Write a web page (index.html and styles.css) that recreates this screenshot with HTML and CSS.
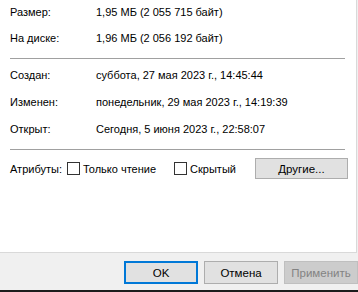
FILE: index.html
```html
<!DOCTYPE html>
<html lang="ru">
<head>
  <meta charset="UTF-8" />
  <title>Свойства</title>
  <link rel="stylesheet" href="styles.css">
</head>
<body>

  <div class="panel">
    <div class="group first">
      <div class="row"><span class="label">Размер:</span><span>1,95 МБ (2 055 715 байт)</span></div>
      <div class="row"><span class="label">На диске:</span><span>1,96 МБ (2 056 192 байт)</span></div>
    </div>
    <div class="sep"></div>
    <div class="group dates">
      <div class="row"><span class="label">Создан:</span><span>суббота, 27 мая 2023 г., 14:45:44</span></div>
      <div class="row"><span class="label">Изменен:</span><span>понедельник, 29 мая 2023 г., 14:19:39</span></div>
      <div class="row"><span class="label">Открыт:</span><span>Сегодня, 5 июня 2023 г., 22:58:07</span></div>
    </div>
    <div class="sep"></div>
    <div class="attrs">
      <span>Атрибуты:</span>
      <label class="check"><span class="box"></span>Только чтение</label>
      <label class="check hidden-attr"><span class="box"></span>Скрытый</label>
      <button class="btn other">Другие...</button>
    </div>
  </div>

  <div class="actions">
    <button class="btn default">OK</button>
    <button class="btn">Отмена</button>
    <button class="btn" disabled>Применить</button>
  </div>

  <div class="taskbar"></div>

</body>
</html>
```

FILE: styles.css
```css
* {
  margin: 0;
  padding: 0;
  box-sizing: border-box;
}

html, body {
  width: 358px;
  height: 292px;
  overflow: hidden;
}

body {
  background: #f0f0f0;
  font-family: "Liberation Sans", Arial, sans-serif;
  font-size: 11px;
  color: #000;
  display: flex;
  flex-direction: column;
}

.panel {
  width: 357px;
  height: 253px;
  background: #fff;
  border-right: 1px solid #d9d9d9;
  border-bottom: 1px solid #d9d9d9;
  padding: 4px 0 0 10px;
  flex-shrink: 0;
}

.group {
  display: flex;
  flex-direction: column;
}

.first {
  gap: 10px;
}

.dates {
  gap: 11px;
  margin-top: 8px;
}

.row {
  display: flex;
  height: 16px;
  line-height: 16px;
  white-space: nowrap;
}

.label {
  width: 86px;
}

.sep {
  width: 335px;
  height: 1px;
  background: #a0a0a0;
  margin-top: 12px;
}

.attrs {
  display: flex;
  align-items: center;
  width: 338px;
  height: 21px;
  margin-top: 8px;
  white-space: nowrap;
}

.check {
  display: flex;
  align-items: center;
}

.box {
  width: 13px;
  height: 13px;
  border: 1px solid #333;
  background: #fff;
  margin: 0 3px 0 5px;
}

.hidden-attr .box {
  margin-left: 18px;
}

.btn {
  font-family: inherit;
  font-size: 11.5px;
  color: #000;
  width: 75px;
  height: 23px;
  background: #e1e1e1;
  border: 1px solid #adadad;
}

.btn.other {
  width: 93px;
  height: 21px;
  margin-left: auto;
}

.btn.default {
  border: 2px solid #0078d7;
}

.btn:disabled {
  background: #cccccc;
  border-color: #bfbfbf;
  color: #838383;
}

.actions {
  display: flex;
  gap: 6px;
  padding-left: 124px;
  margin-top: 8px;
  flex-shrink: 0;
}

.taskbar {
  margin-top: auto;
  height: 2px;
  background: #1c1c1c;
  flex-shrink: 0;
}
```
